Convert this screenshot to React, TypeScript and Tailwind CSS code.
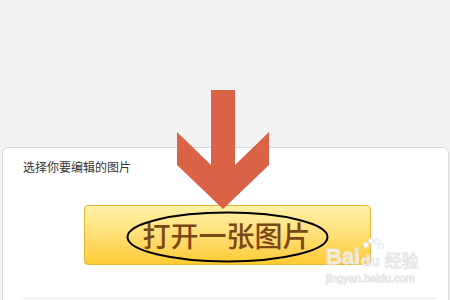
import React from "react";

const cjk = { fontFamily: '"Noto Sans CJK SC", "Noto Sans", sans-serif' };

const App = () => {
  return (
    <div className="relative w-[450px] h-[300px] overflow-hidden bg-[#f3f3f3]" style={cjk}>
      <div className="pt-[147px] pl-[2px] pr-[1px] h-full">
        <div className="h-[170px] bg-white border border-[#d9d9d9] rounded-[6px] px-[19px] pt-[10px]">
          <p className="text-[12px] leading-[18px] text-[#333] pl-[1px]">选择你要编辑的图片</p>
          <div className="pl-[62px] pt-[29px]">
            <button className="relative w-[287px] h-[60px] rounded-[4px] border border-[#e2b73a] bg-gradient-to-b from-[#fff1a6] to-[#ffcb2e] flex items-center justify-center">
              <span className="text-[28px] leading-none font-medium text-[#7a4716] -ml-[2px]">打开一张图片</span>
              <svg className="absolute left-[41px] top-[5px]" width="203" height="52" viewBox="0 0 203 52">
                <ellipse cx="101.5" cy="26" rx="100" ry="24.5" fill="none" stroke="#000" strokeWidth="2" />
              </svg>
            </button>
          </div>
          <div className="mt-[33px] h-px bg-[#ececec] w-[415px]" />
        </div>
      </div>
      <svg className="absolute left-[176px] top-[89px]" width="95" height="122" viewBox="0 0 95 122">
        <polygon points="35,1 59,1 59,76 93,43 93,76 47,120 1,76 1,43 35,76" fill="#da6347" />
      </svg>
      <div className="absolute left-[326px] top-[245px] flex flex-col items-start text-white/70 [-webkit-text-stroke:1px_#e6e6e6]" style={{ fontFamily: '"Liberation Sans", sans-serif' }}>
        <div className="relative flex items-end gap-[1px]">
          <span className="text-[22px] leading-[24px] font-bold">Bai</span>
          <span className="text-[15px] leading-[17px] font-bold">du</span>
          <span className="text-[17px] leading-[19px] ml-[4px]" style={cjk}>经验</span>
          <svg className="absolute left-[36px] -top-[8px]" width="22" height="16" viewBox="0 0 22 16">
            <g fill="#fff" stroke="#e6e6e6" strokeWidth="1">
              <circle cx="4" cy="8" r="2.5" />
              <circle cx="9" cy="4" r="2.5" />
              <circle cx="15" cy="4" r="2.5" />
              <circle cx="19" cy="9" r="2.5" />
            </g>
          </svg>
        </div>
        <span className="text-[11px] leading-[13px] mt-[3px]">jingyan.baidu.com</span>
      </div>
    </div>
  );
};

export default App;
